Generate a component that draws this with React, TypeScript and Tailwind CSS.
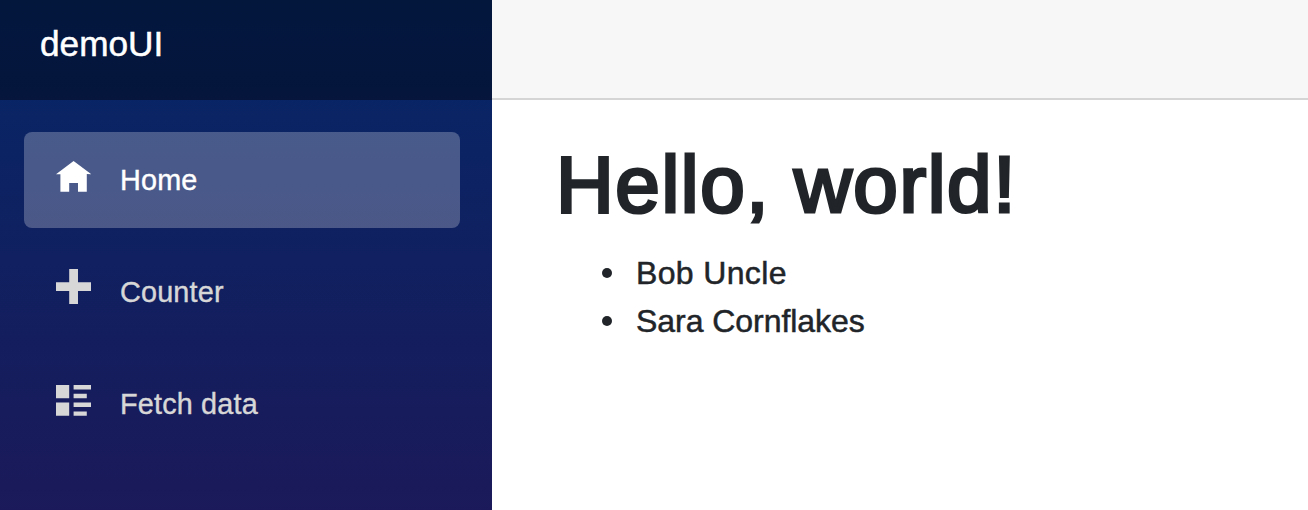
const navItems = [
  {
    label: 'Home',
    icon: 'M4 0l-4 3h1v4h2v-2h2v2h2v-4.03l1 .03-4-3z',
    iconClass: 'mt-[29px]',
    active: true,
  },
  {
    label: 'Counter',
    icon: 'M3 0v3h-3v2h3v3h2v-3h3v-2h-3v-3h-2z',
    iconClass: 'mt-[24.5px]',
    active: false,
  },
  {
    label: 'Fetch data',
    icon: 'M0 0v3h3v-3h-3zm4 0v1h4v-1h-4zm0 2v1h3v-1h-3zm-4 2v3h3v-3h-3zm4 0v1h4v-1h-4zm0 2v1h3v-1h-3z',
    iconClass: 'mt-[29px]',
    active: false,
  },
];

const people = [
  { name: 'Bob Uncle', tracking: 'tracking-[0.35px]' },
  { name: 'Sara Cornflakes', tracking: 'tracking-[-0.05px]' },
];

function Sidebar() {
  return (
    <aside className="w-[492px] shrink-0 bg-[linear-gradient(180deg,rgb(5,39,103)_0px,#3a0647_1230px)]">
      <div className="flex h-[100px] items-center bg-black/40 pb-3 pl-10">
        <a href="#" className="text-[35.2px] leading-none text-white [-webkit-text-stroke:0.5px]">
          demoUI
        </a>
      </div>
      <nav className="flex flex-col gap-4 pt-8 pr-8 pl-6">
        {navItems.map((item) => (
          <a
            key={item.label}
            href="#"
            className={
              item.active
                ? 'flex h-24 rounded-lg bg-white/25 pl-8 text-white'
                : 'flex h-24 rounded-lg pl-8 text-[#d7d7d7]'
            }
          >
            <span className={`w-16 shrink-0 ${item.iconClass}`}>
              <svg viewBox="0 0 8 8" className="block size-[35.2px] fill-current" aria-hidden="true">
                <path d={item.icon} />
              </svg>
            </span>
            <span className="text-[28.8px] leading-[96px] tracking-[0.18px] [-webkit-text-stroke:0.4px]">{item.label}</span>
          </a>
        ))}
      </nav>
    </aside>
  );
}

export default function App() {
  return (
    <div className="flex h-screen overflow-hidden bg-white font-['Liberation_Sans',Arial,sans-serif] text-[#212529]">
      <Sidebar />
      <div className="flex-1">
        <header className="h-[100px] border-b-2 border-[#d6d5d5] bg-[#f7f7f7]" />
        <main className="pt-[37px] pl-16">
          <h1 className="mb-4 text-[80px] leading-[96px] font-normal tracking-[1.6px] whitespace-nowrap [-webkit-text-stroke:3.2px]">
            Hello, world!
          </h1>
          <ul className="pl-[46px] text-[32px] leading-[48px]">
            {people.map(({ name, tracking }) => (
              <li key={name} className="flex">
                <span className="mt-[19px] mr-6 size-2.5 shrink-0 rounded-full bg-[#212529]" />
                <span className={`[-webkit-text-stroke:0.5px] ${tracking}`}>{name}</span>
              </li>
            ))}
          </ul>
        </main>
      </div>
    </div>
  );
}
